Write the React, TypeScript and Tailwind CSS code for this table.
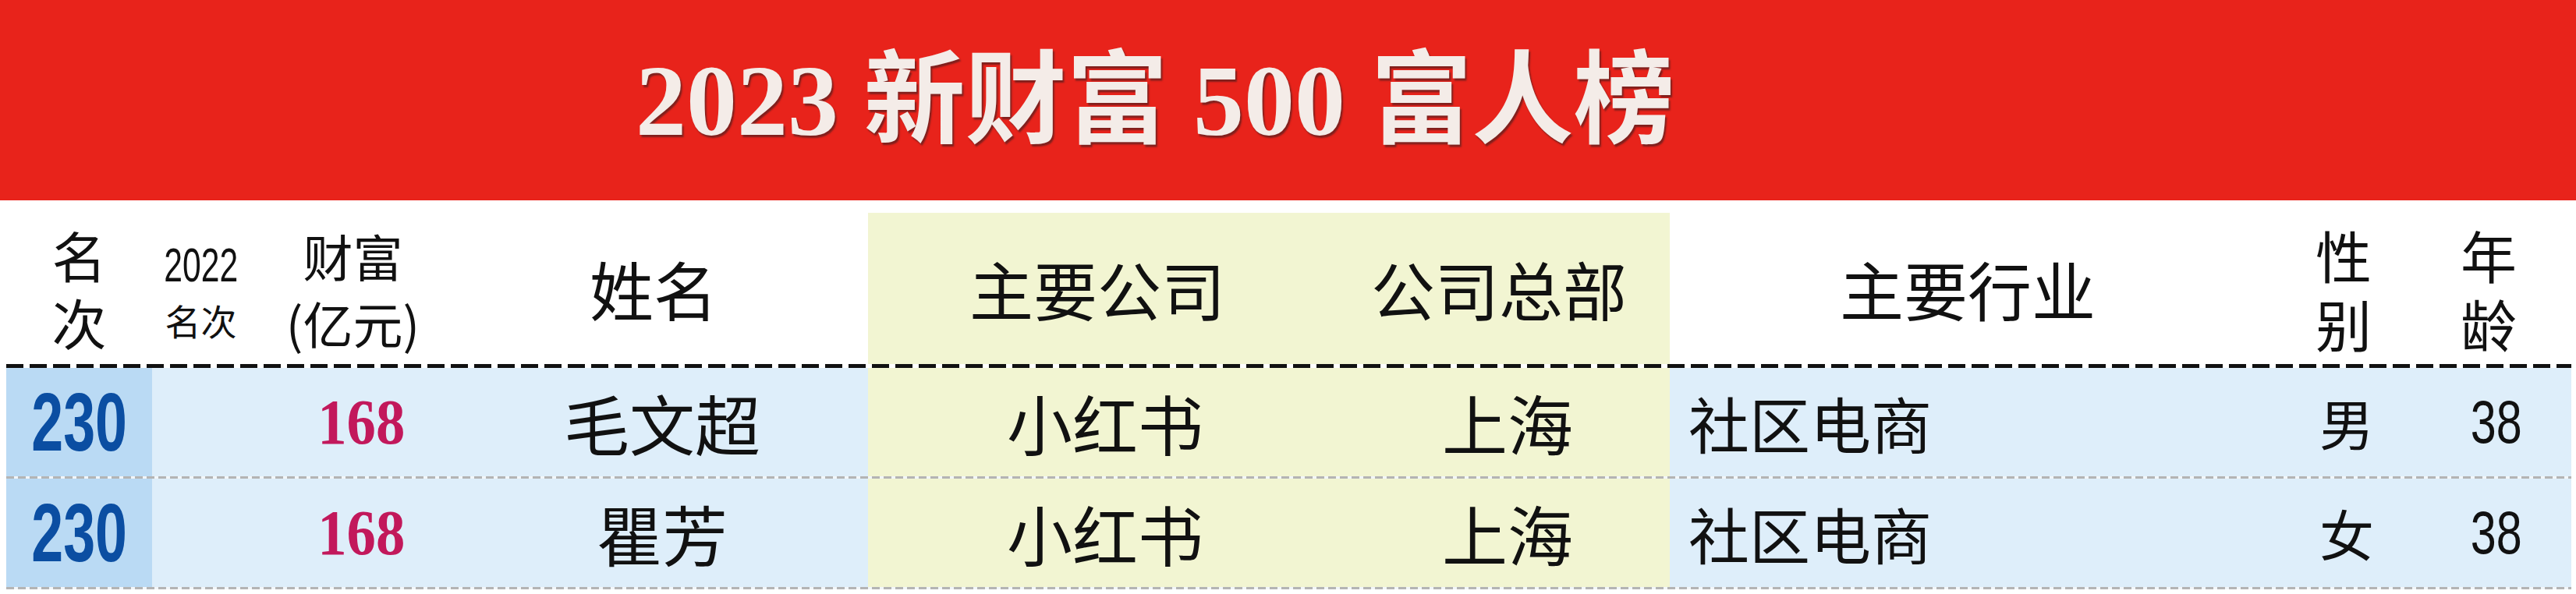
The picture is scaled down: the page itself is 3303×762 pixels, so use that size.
import React from "react";

const cjk = "font-['Noto_Sans_CJK_SC','Noto_Sans',sans-serif]";
const dashedBlack =
  "h-[5px] bg-[repeating-linear-gradient(90deg,#111_0px,#111_22px,transparent_22px,transparent_30px)]";
const dashedGrey =
  "h-[3px] bg-[repeating-linear-gradient(90deg,#b4b4b4_0px,#b4b4b4_10px,#f2f6f9_10px,#f2f6f9_15px)]";

const rows = [
  { rank: "230", wealth: "168", name: "毛文超", company: "小红书", hq: "上海", industry: "社区电商", gender: "男", age: "38" },
  { rank: "230", wealth: "168", name: "瞿芳", company: "小红书", hq: "上海", industry: "社区电商", gender: "女", age: "38" },
];

// two characters stacked as one wrapped text
function Stacked({ text, size }: { text: string; size: string }) {
  return <div className={`w-[1em] break-all text-center ${size}`}>{text}</div>;
}

export default function App() {
  return (
    <div className={`w-[3303px] h-[762px] bg-white overflow-hidden text-[#111] ${cjk}`}>
      {/* banner */}
      <div className="h-[257px] bg-[#e8231b] flex items-center pl-[815px]">
        <h1 className="text-[130px] leading-none font-bold whitespace-nowrap text-[#f4ece8] font-['Liberation_Serif','Noto_Sans_CJK_SC',serif] [text-shadow:2px_3px_2px_rgba(70,30,30,0.65)]">
          2023 新财富 500 富人榜
        </h1>
      </div>

      <div className="ml-[8px] w-[3289px]">
        <div className="h-[16px]" />
        {/* header */}
        <div className="grid grid-cols-[187px_125px_265px_528px_600px_428px_764px_200px_192px] h-[194px]">
          <div className="flex items-center justify-center">
            <Stacked text="名次" size="text-[70px] leading-[86px]" />
          </div>
          <div className="flex flex-col items-center justify-center">
            <span className="inline-block scale-x-[0.7] text-[61px] leading-[80px] font-['Liberation_Sans',sans-serif]">2022</span>
            <span className="text-[46px] leading-[60px]">名次</span>
          </div>
          <div className="flex flex-col items-center justify-center text-[64px] leading-[86px]">
            <span>财富</span>
            <span>(亿元)</span>
          </div>
          <div className="flex items-center justify-center pr-[22px] text-[82px] leading-none">姓名</div>
          <div className="flex items-center justify-center pr-[12px] bg-[#f2f5d2] text-[82px] leading-none">主要公司</div>
          <div className="flex items-center justify-center pr-[10px] bg-[#f2f5d2] text-[82px] leading-none">公司总部</div>
          <div className="flex items-center justify-center text-[82px] leading-none">主要行业</div>
          <div className="flex items-center justify-center">
            <Stacked text="性别" size="text-[72px] leading-[88px]" />
          </div>
          <div className="flex items-center justify-center pr-[20px]">
            <Stacked text="年龄" size="text-[72px] leading-[88px]" />
          </div>
        </div>
        <div className={dashedBlack} />

        {rows.map((r, i) => (
          <div key={i}>
            <div className="grid grid-cols-[187px_125px_265px_528px_600px_428px_764px_200px_192px] h-[139px] bg-[#deeefa]">
              <div className="flex items-center justify-center bg-[#badaf4]">
                <span className="inline-block scale-x-[0.7] text-[105px] leading-none font-bold text-[#0b4ea2] font-['Liberation_Sans',sans-serif]">
                  {r.rank}
                </span>
              </div>
              <div />
              <div className="flex items-center justify-center pl-[22px]">
                <span className="inline-block scale-x-[0.9] text-[83px] leading-none font-bold text-[#c2185b] font-['Liberation_Serif',serif]">
                  {r.wealth}
                </span>
              </div>
              <div className="flex items-center justify-center text-[84px] leading-none">{r.name}</div>
              <div className="flex items-center justify-center pl-[8px] bg-[#f2f5d2] text-[84px] leading-none">{r.company}</div>
              <div className="flex items-center justify-center pl-[12px] bg-[#f2f5d2] text-[84px] leading-none">{r.hq}</div>
              <div className="flex items-center pl-[24px] text-[78px] leading-none">{r.industry}</div>
              <div className="flex items-center justify-center pl-[8px] text-[70px] leading-none">{r.gender}</div>
              <div className="flex items-center justify-center">
                <span className="inline-block scale-x-[0.77] text-[77px] leading-none font-['Liberation_Sans',sans-serif]">
                  {r.age}
                </span>
              </div>
            </div>
            <div className={dashedGrey} />
          </div>
        ))}
      </div>
    </div>
  );
}
